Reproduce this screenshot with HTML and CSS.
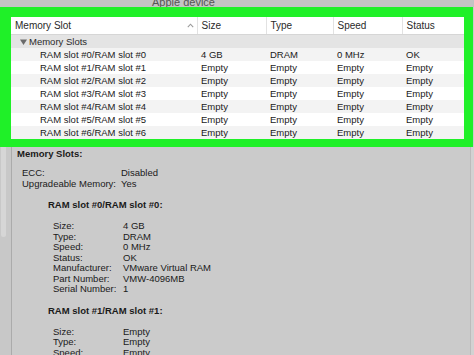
FILE: index.html
```html
<!DOCTYPE html>
<html lang="en">

<head>
    <meta charset="UTF-8">
    <meta name="viewport" content="width=device-width, initial-scale=1.0">
    <title>System Information - Memory</title>
    <link rel="stylesheet" href="styles.css">
</head>

<body>
    <div class="titlebar"><span>Apple device</span></div>

    <div class="highlight">
        <table class="slots">
            <colgroup>
                <col class="col-name">
                <col class="col-size">
                <col class="col-type">
                <col class="col-speed">
                <col class="col-status">
            </colgroup>
            <thead>
                <tr>
                    <th>Memory Slot
                        <svg class="caret" width="7" height="5" viewBox="0 0 7 5">
                            <path d="M0.8 4.2 L3.5 1.2 L6.2 4.2" fill="none" stroke="#9a9a9a" stroke-width="1.1"/>
                        </svg>
                    </th>
                    <th>Size</th>
                    <th>Type</th>
                    <th>Speed</th>
                    <th>Status</th>
                </tr>
            </thead>
            <tbody>
                <tr class="group">
                    <td colspan="5">
                        <svg class="arrow" width="7" height="6" viewBox="0 0 7 6">
                            <path d="M0 0.5 H7 L3.5 6 Z" fill="#6a6a6a"/>
                        </svg>Memory Slots
                    </td>
                </tr>
                <tr>
                    <td class="name">RAM slot #0/RAM slot #0</td>
                    <td>4 GB</td>
                    <td>DRAM</td>
                    <td>0 MHz</td>
                    <td>OK</td>
                </tr>
                <tr>
                    <td class="name">RAM slot #1/RAM slot #1</td>
                    <td>Empty</td>
                    <td>Empty</td>
                    <td>Empty</td>
                    <td>Empty</td>
                </tr>
                <tr>
                    <td class="name">RAM slot #2/RAM slot #2</td>
                    <td>Empty</td>
                    <td>Empty</td>
                    <td>Empty</td>
                    <td>Empty</td>
                </tr>
                <tr>
                    <td class="name">RAM slot #3/RAM slot #3</td>
                    <td>Empty</td>
                    <td>Empty</td>
                    <td>Empty</td>
                    <td>Empty</td>
                </tr>
                <tr>
                    <td class="name">RAM slot #4/RAM slot #4</td>
                    <td>Empty</td>
                    <td>Empty</td>
                    <td>Empty</td>
                    <td>Empty</td>
                </tr>
                <tr>
                    <td class="name">RAM slot #5/RAM slot #5</td>
                    <td>Empty</td>
                    <td>Empty</td>
                    <td>Empty</td>
                    <td>Empty</td>
                </tr>
                <tr>
                    <td class="name">RAM slot #6/RAM slot #6</td>
                    <td>Empty</td>
                    <td>Empty</td>
                    <td>Empty</td>
                    <td>Empty</td>
                </tr>
            </tbody>
        </table>
    </div>

    <div class="detail-pane">
        <div class="scroller"><div class="thumb"></div></div>

        <div class="details">
            <h4>Memory Slots:</h4>
            <div class="pairs top-pairs">
                <span>ECC:</span><span>Disabled</span>
                <span>Upgradeable Memory:</span><span>Yes</span>
            </div>

            <h4 class="slot-title">RAM slot #0/RAM slot #0:</h4>
            <div class="pairs slot-pairs">
                <span>Size:</span><span>4 GB</span>
                <span>Type:</span><span>DRAM</span>
                <span>Speed:</span><span>0 MHz</span>
                <span>Status:</span><span>OK</span>
                <span>Manufacturer:</span><span>VMware Virtual RAM</span>
                <span>Part Number:</span><span>VMW-4096MB</span>
                <span>Serial Number:</span><span>1</span>
            </div>

            <h4 class="slot-title">RAM slot #1/RAM slot #1:</h4>
            <div class="pairs slot-pairs">
                <span>Size:</span><span>Empty</span>
                <span>Type:</span><span>Empty</span>
                <span>Speed:</span><span>Empty</span>
            </div>
        </div>

        <div class="edge"></div>
    </div>
</body>

</html>
```

FILE: styles.css
```css
body {
    font-family: 'Liberation Sans', Arial, sans-serif;
    font-size: 9.5px;
    background-color: #cbcbcb;
    color: #1a1a1a;
    margin: 0;
    height: 355px;
    overflow: hidden;
}

.titlebar {
    height: 7px;
    overflow: hidden;
    background-color: #c4c4c4;
    padding-left: 152px;
}

.titlebar span {
    display: block;
    margin-top: -4px;
    font-size: 11px;
    line-height: 12px;
    color: #555;
}

.highlight {
    width: 453px;
    background-color: #1ff028;
    padding: 10px 9px 8px 11px;
}

.slots {
    width: 453px;
    border-collapse: collapse;
    table-layout: fixed;
    background-color: #fff;
}

.col-name { width: 186px; }
.col-size { width: 69px; }
.col-type { width: 67px; }
.col-speed { width: 69px; }
.col-status { width: 62px; }

.slots th {
    height: 17px;
    padding: 0 0 0 4px;
    font-size: 10px;
    font-weight: normal;
    text-align: left;
    color: #2a2a2a;
    border-bottom: 1px solid #d6d6d6;
    border-left: 1px solid #e2e2e2;
}

.slots th:first-child {
    border-left: none;
}

.caret {
    float: right;
    margin: 3px 3px 0 0;
}

.slots td {
    height: 13px;
    padding: 0 0 0 4px;
    line-height: 13px;
    white-space: nowrap;
    color: #1a1a1a;
}

.slots tbody tr:nth-child(even) {
    background-color: #f3f3f3;
}

.slots .group td {
    background-color: #e4e4e4;
    padding-left: 9px;
    color: #2a2a2a;
}

.arrow {
    margin-right: 2px;
    vertical-align: 0;
}

.slots td.name {
    padding-left: 29px;
}

.detail-pane {
    display: flex;
    height: 208px;
}

.scroller {
    width: 11px;
    border-right: 1px solid #ababab;
    background-color: #c8c8c8;
}

.thumb {
    width: 5px;
    height: 90px;
    margin-left: 1px;
    border-radius: 0 0 3px 3px;
    background-color: #d6d6d6;
}

.details {
    flex: 1;
    padding: 1px 0 0 5px;
    line-height: 10.5px;
}

.details h4 {
    margin: 0 0 9px 0;
    font-size: 9.5px;
    line-height: 11px;
}

.details .slot-title {
    margin: 0 0 11px 31px;
}

.pairs {
    display: grid;
    margin-bottom: 10px;
}

.top-pairs {
    grid-template-columns: 99px auto;
    margin-left: 5px;
}

.slot-pairs {
    grid-template-columns: 70px auto;
    margin-left: 36px;
}

.edge {
    width: 3px;
    border-left: 1px solid #bcbcbc;
    background-color: #d2d2d2;
}
```
